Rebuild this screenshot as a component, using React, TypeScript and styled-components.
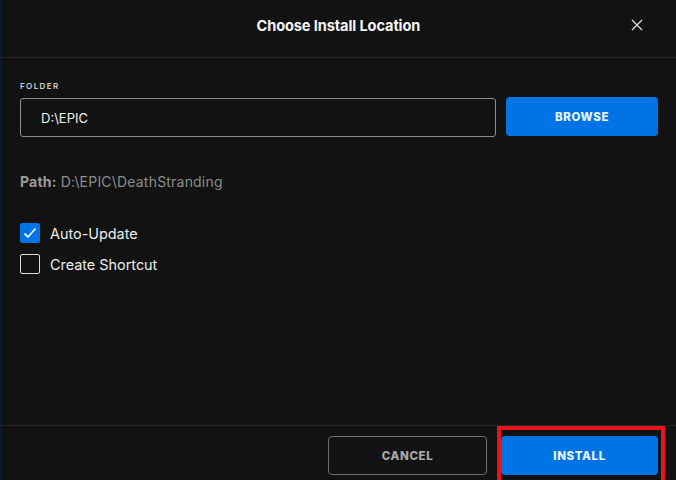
import React, { useState } from 'react';
import styled, { createGlobalStyle } from 'styled-components';

const GlobalStyle = createGlobalStyle`
  html, body {
    margin: 0;
    padding: 0;
    background: #121212;
  }
  body {
    font-family: Inter, 'Noto Sans', 'Liberation Sans', sans-serif;
    color: #f2f2f2;
  }
`;

const BLUE = '#0074e4';

const Dialog = styled.div`
  position: relative;
  display: flex;
  flex-direction: column;
  width: 676px;
  height: 480px;
  overflow: hidden;
  background: #121212;
  box-shadow: inset 2px 0 0 #0b1a30;
`;

const Header = styled.div`
  display: flex;
  align-items: center;
  justify-content: center;
  height: 58px;
  padding-bottom: 6px;
  box-sizing: border-box;
  border-bottom: 1px solid #262626;
  position: relative;
`;

const Title = styled.h1`
  margin: 0;
  font-size: 15px;
  font-weight: 700;
  letter-spacing: -0.1px;
  color: #f5f5f5;
  transform: scaleX(0.97);
`;

const CloseButton = styled.button`
  position: absolute;
  right: 32px;
  top: 18px;
  width: 14px;
  height: 14px;
  padding: 0;
  border: none;
  background: none;
  color: #d8d8d8;
  cursor: pointer;
  display: flex;
`;

const Body = styled.div`
  flex: 1;
  display: flex;
  flex-direction: column;
  padding: 23px 18px 0 20px;
`;

const Label = styled.div`
  font-size: 8px;
  letter-spacing: 1.4px;
  font-weight: 500;
  color: #e8e8e8;
  line-height: 10px;
`;

const FolderRow = styled.div`
  display: flex;
  align-items: flex-start;
  gap: 10px;
  margin-top: 6px;
`;

const FolderInput = styled.div`
  flex: 1;
  height: 37px;
  margin-top: 1px;
  border: 1px solid #8e8e8e;
  border-radius: 3px;
  display: flex;
  align-items: center;
  padding-left: 20px;
  font-size: 13px;
  color: #f0f0f0;
`;

const PrimaryButton = styled.button<{ $width: number }>`
  width: ${(p) => p.$width}px;
  height: 39px;
  border: none;
  border-radius: 4px;
  background: ${BLUE};
  color: #eaf4ff;
  font-family: inherit;
  font-size: 11.5px;
  font-weight: 800;
  letter-spacing: 0.6px;
  cursor: pointer;
`;

const SecondaryButton = styled.button<{ $width: number }>`
  width: ${(p) => p.$width}px;
  height: 39px;
  border: 1px solid #6e6e6e;
  border-radius: 4px;
  background: transparent;
  color: #a8a8a8;
  font-family: inherit;
  font-size: 11.5px;
  font-weight: 800;
  letter-spacing: 0.6px;
  cursor: pointer;
`;

const PathLine = styled.div`
  margin-top: 36px;
  font-size: 14px;
  letter-spacing: 0.2px;
  color: #8c8c8c;
  b {
    font-weight: 700;
    color: #9c9c9c;
  }
`;

const Options = styled.div`
  display: flex;
  flex-direction: column;
  gap: 11px;
  margin-top: 33px;
`;

const OptionRow = styled.label`
  display: flex;
  align-items: center;
  gap: 10px;
  font-size: 14.4px;
  color: #ececec;
  cursor: pointer;
`;

const Box = styled.span<{ $checked: boolean }>`
  width: 20px;
  height: 20px;
  box-sizing: border-box;
  border-radius: 2px;
  display: flex;
  align-items: center;
  justify-content: center;
  background: ${(p) => (p.$checked ? BLUE : 'transparent')};
  border: ${(p) => (p.$checked ? 'none' : '1px solid #dcdcdc')};
`;

const Footer = styled.div`
  display: flex;
  justify-content: flex-end;
  gap: 14px;
  height: 55px;
  box-sizing: border-box;
  padding: 10px 18px 0 0;
  border-top: 1px solid #262626;
`;

const Highlight = styled.div`
  position: relative;
  &::after {
    content: '';
    position: absolute;
    left: -4px;
    right: -7px;
    top: -10px;
    bottom: -10px;
    border: 4px solid #e8141c;
    pointer-events: none;
  }
`;

const Check = () => (
  <svg width="14" height="12" viewBox="0 0 14 12" fill="none">
    <path d="M1.5 6.5 L5 10 L12.5 1.5" stroke="#e9f3ff" strokeWidth="1.8" />
  </svg>
);

const Option = ({ label, initial }: { label: string; initial: boolean }) => {
  const [checked, setChecked] = useState(initial);
  return (
    <OptionRow onClick={() => setChecked(!checked)}>
      <Box $checked={checked}>{checked && <Check />}</Box>
      {label}
    </OptionRow>
  );
};

const App = () => {
  return (
    <>
      <GlobalStyle />
      <Dialog>
        <Header>
          <Title>Choose Install Location</Title>
          <CloseButton aria-label="close">
            <svg width="14" height="14" viewBox="0 0 14 14">
              <path d="M2 2 L12 12 M12 2 L2 12" stroke="currentColor" strokeWidth="1.4" />
            </svg>
          </CloseButton>
        </Header>
        <Body>
          <Label>FOLDER</Label>
          <FolderRow>
            <FolderInput>D:\EPIC</FolderInput>
            <PrimaryButton $width={152}>BROWSE</PrimaryButton>
          </FolderRow>
          <PathLine>
            <b>Path:</b> D:\EPIC\DeathStranding
          </PathLine>
          <Options>
            <Option label="Auto-Update" initial={true} />
            <Option label="Create Shortcut" initial={false} />
          </Options>
        </Body>
        <Footer>
          <SecondaryButton $width={159}>CANCEL</SecondaryButton>
          <Highlight>
            <PrimaryButton $width={157}>INSTALL</PrimaryButton>
          </Highlight>
        </Footer>
      </Dialog>
    </>
  );
};

export default App;
